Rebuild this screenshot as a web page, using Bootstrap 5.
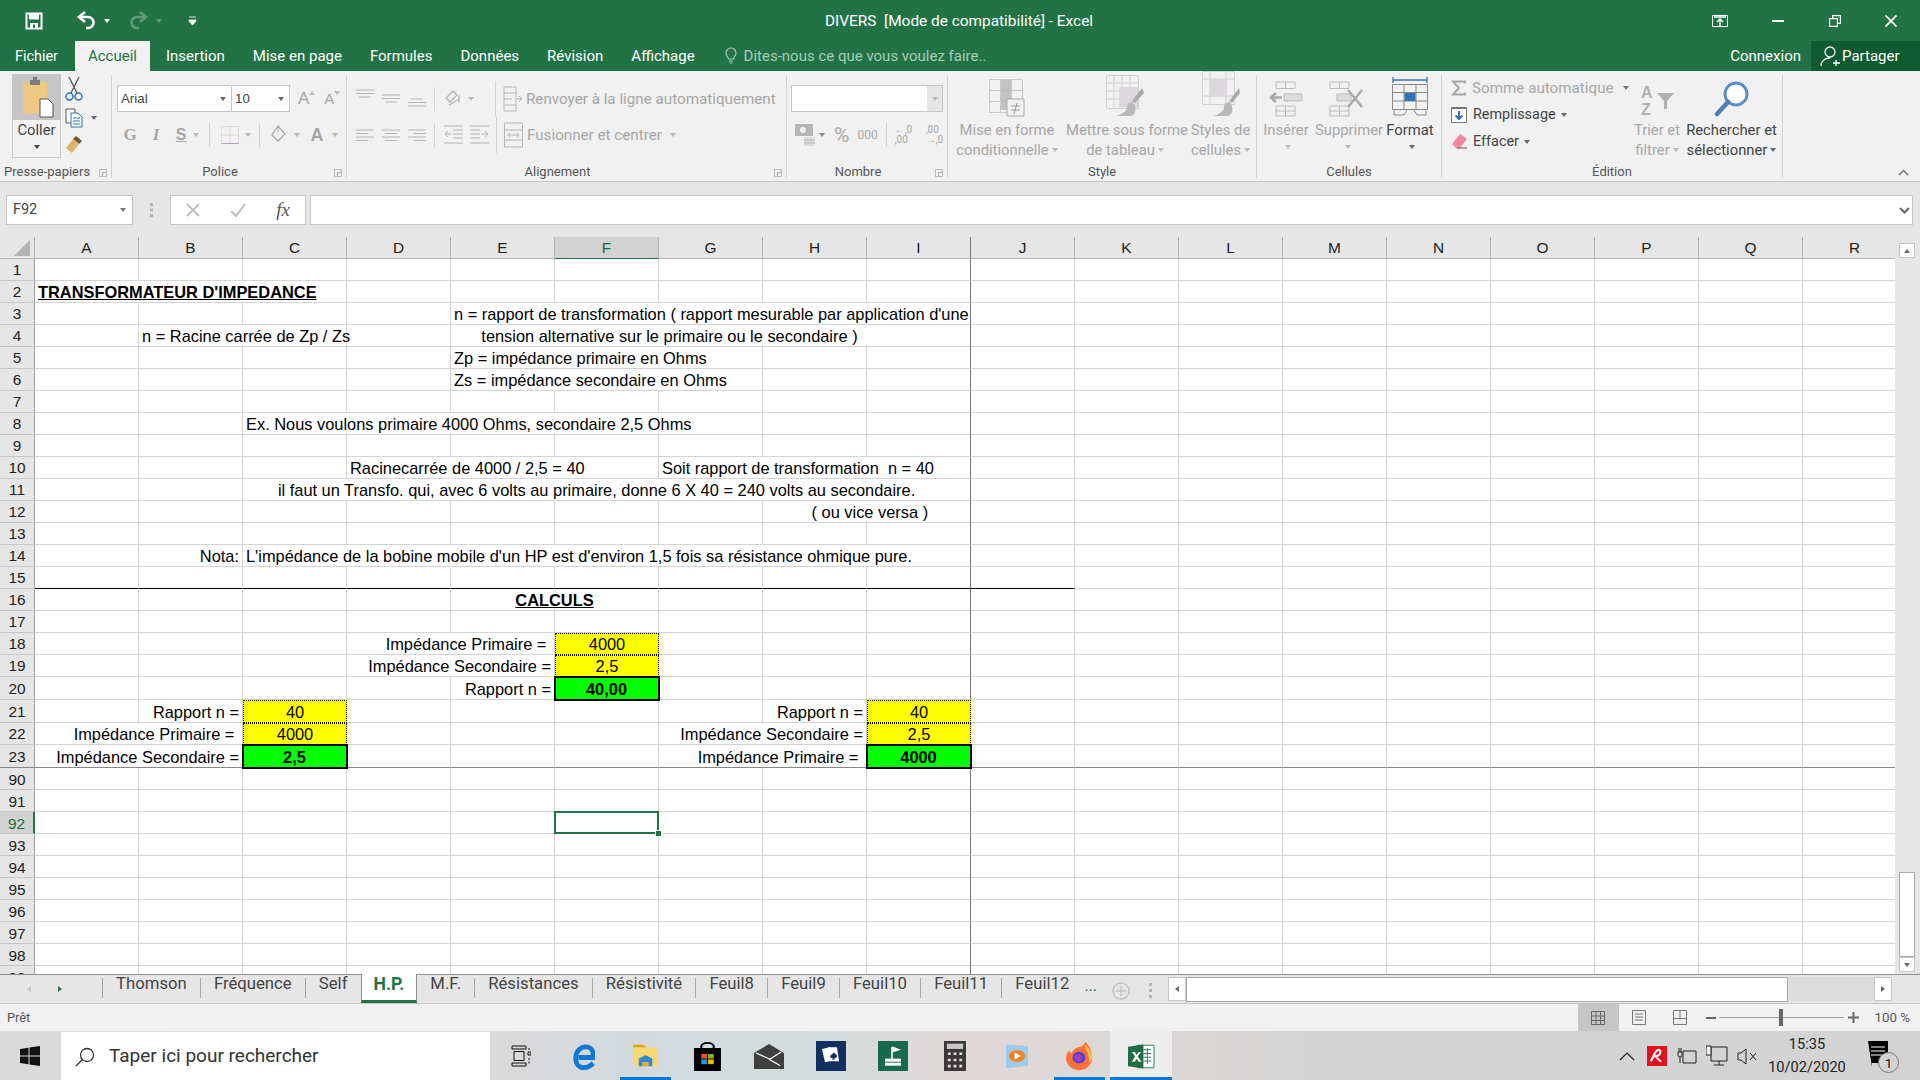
<!DOCTYPE html>
<html lang="fr">
<head>
<meta charset="UTF-8">
<title>DIVERS [Mode de compatibilité] - Excel</title>
<link href="https://cdn.jsdelivr.net/npm/bootstrap@5.3.3/dist/css/bootstrap.min.css" rel="stylesheet">
<style>
html, body { width: 1920px; height: 1080px; overflow: hidden; }
body { font-family: Roboto, "Open Sans", sans-serif; font-size: 14.8px; color: #444; background: #e6e6e6; line-height: 20px; }
svg { display: block; flex: none; }
.tri { width: 0; height: 0; border-left: 3.5px solid transparent; border-right: 3.5px solid transparent; border-top: 4px solid #666; flex: none; display: inline-block; }
.tri.dim { border-top-color: #b8b8b8; }
.tri.white { border-top-color: #fff; }
.tri.faded { border-top-color: #5f9a7a; }

/* title bar + tabs */
.titlebar { height: 41px; background: #217346; color: #fff; position: relative; }
.qat { width: 825px; padding-left: 25px; }
.doc-title { font-size: 15.4px; width: 268px; white-space: pre; }
.win { margin-left: auto; width: 208px; padding-right: 23px; justify-content: space-between; }
.menubar { height: 30px; background: #217346; color: #fff; padding-left: 15px; font-size: 15px; }
.menubar .mtab { padding: 0 14px; line-height: 30px; height: 30px; white-space: nowrap; }
.menubar .fichier { padding: 0; margin-right: 17px; line-height: 32px; font-size: 14.4px; }
.menubar .mtab.active { background: #f1f1f1; color: #217346; padding: 0 13px; margin-right: 2px; }
.tell { color: #a9cbb7; margin-left: 16px; gap: 7px; height: 30px; }
.connexion { margin-left: auto; margin-right: 10px; line-height: 30px; }
.partager { width: 109px; height: 30px; background: #0f5b31; padding-left: 8px; gap: 5px; }

/* ribbon */
.ribbon { height: 111px; background: #f1f1f1; border-bottom: 1px solid #c6c6c6; padding-top: 4px; position: relative; }
.rgroup { height: 103px; border-right: 1px solid #d2d2d2; flex: none; }
.rbody { height: 87px; display: flex; }
.rlabel { height: 16px; font-size: 13px; line-height: 20px; text-align: center; color: #555; position: relative; white-space: nowrap; }
.rlabel.lnch { padding-right: 18px; }
.launch { position: absolute; right: 4px; top: 7px; width: 8px; height: 8px; border: 1px solid #bbb; border-top-width: 1px; }
.launch::after { content: ""; position: absolute; right: 0; bottom: 0; width: 4px; height: 4px; background: #f1f1f1; border-left: 1px solid #aaa; border-top: 1px solid #aaa; }
.g-clip { width: 112px; } .g-font { width: 235px; } .g-align { width: 440px; }
.g-num { width: 161px; } .g-style { width: 309px; } .g-cell { width: 185px; } .g-edit { width: 341px; }
.coller { width: 49px; height: 84px; margin: -1px 0 0 12px; border: 1px solid #c6c6c6; text-align: center; }
.coller-top { height: 45px; background: #c6c6c6; }
.coller .lbl { line-height: 20px; color: #444; margin-bottom: 5px; }
.bigbtn { flex: none; text-align: center; line-height: 20px; color: #a6a6a6; white-space: nowrap; }
.bigbtn .ico { height: 45px; display: flex; justify-content: center; align-items: flex-end; padding-bottom: 3px; }
.bigbtn.on { color: #444; }
.bigbtn .tri { vertical-align: 3px; margin-left: 3px; }
.combo { height: 27px; background: #fff; border: 1px solid #c6c6c6; font-family: "Liberation Sans", sans-serif; font-size: 13.3px; color: #444; padding-left: 3px; }
.rsep { width: 1px; background: #d2d2d2; height: 24px; flex: none; }
.dimtxt { color: #a6a6a6; white-space: nowrap; font-size: 15.2px; }
.edit-row { height: 27px; gap: 6px; font-size: 14.4px; }
.glyph { font-family: "Liberation Sans", sans-serif; color: #a6a6a6; font-weight: 700; font-size: 16px; text-align: center; }

/* formula bar */
.fbar { height: 55px; background: #e6e6e6; padding: 13px 7px 0 6px; }
.fbar .box { height: 30px; background: #fff; border: 1px solid #c6c6c6; }
.namebox { width: 127px; padding: 0 6px; font-size: 14.4px; }
.fxbox { width: 136px; margin-left: 37px; justify-content: space-around; padding: 0; }
.fxsym { font-family: "Liberation Serif", serif; font-style: italic; font-size: 19px; color: #555; }
.finput { flex: 1; margin-left: 4px; padding-right: 2px; }

/* sheet */
.sheet-wrap { height: 737px; }
.sheet-clip { width: 1895px; height: 737px; overflow: hidden; position: relative; background: #fff; }
.sheet { table-layout: fixed; width: 1907px; border-collapse: separate; border-spacing: 0; font-family: "Liberation Sans", Arial, sans-serif; font-size: 16.4px; color: #000; }
.sheet th { background: #e6e6e6; font-weight: 400; text-align: center; font-size: 15.4px; color: #222; border-right: 1px solid #b1b1b1; border-bottom: 1px solid #b1b1b1; padding: 1px 0 0; position: relative; line-height: 18px; }
.sheet thead th { height: 22px; }
.sheet tbody th { border-right-color: #9e9e9e; border-bottom-color: #c6c6c6; }
.sheet tbody tr:nth-child(n+24) th { padding-top: 3px; }
.sheet td { border-right: 1px solid #d4d4d4; border-bottom: 1px solid #d4d4d4; padding: 0 3px 0 3px; white-space: pre; overflow: visible; line-height: 19px; vertical-align: bottom; position: relative; }
.corner::after { content: ""; position: absolute; right: 4px; bottom: 2px; border-left: 16px solid transparent; border-bottom: 16px solid #b4b4b4; }
.sheet th.cur-col { background: #d2d2d2; color: #1e6b41; border-bottom: 1px solid #217346; }
.sheet th.cur-row { background: #d2d2d2; color: #1e6b41; border-right: 2px solid #217346; }
.sheet .freeze-col { border-right-color: #777; }
.sheet tr.rule-black td.to-j { border-bottom-color: #000; }
.sheet tr.rule-freeze td, .sheet tr.rule-freeze th { border-bottom-color: #888; }
.sheet td.titre { font-weight: 700; text-decoration: underline; }
.sheet td.r { text-align: right; }
.sheet td.c { text-align: center; }
.sheet td.inp { background: #ff0; text-align: center; border: 1px dotted #000; }
.sheet td.res { background: #0f0; text-align: center; font-weight: 700; outline: 2px solid #000; outline-offset: -1px; z-index: 1; }
.sheet td.sel { z-index: 3; }
.sheet td.sel::after { content: ""; position: absolute; inset: -1px; border: 2px solid #217346; }
.sheet td.sel::before { content: ""; position: absolute; right: -4px; bottom: -4px; width: 7px; height: 7px; background: #217346; border: 1px solid #fff; z-index: 2; }

.vscroll { width: 25px; background: #e6e6e6; padding: 6px 5px 0 4px; }
.vbtn { width: 16px; height: 15px; background: #fff; border: 1px solid #c6c6c6; }
.vtrack { height: 699px; background: #e6e6e6; position: relative; }
.vthumb { position: absolute; left: 0; top: 614px; width: 16px; height: 85px; background: #fff; border: 1px solid #aaa; }

/* sheet tabs */
.tabs { height: 30px; background: #e6e6e6; border-top: 1px solid #8f8f8f; border-bottom: 1px solid #c6c6c6; position: relative; }
.tabnav { width: 102px; padding-left: 26px; gap: 25px; }
.stab { height: 20px; padding: 0 13.1px; border-left: 1px solid #a6a6a6; line-height: 12px; font-size: 16.7px; color: #444; white-space: nowrap; margin-top: 3px; }
.stab.active { height: 29px; margin-top: -1px; background: #fff; border: 1px solid #8f8f8f; border-top: 0; border-bottom: 3px solid #217346; color: #217346; font-weight: 700; font-size: 17.6px; line-height: 18px; padding: 1px 12px 0; }
.stab.active + .stab { border-left: 0; }
.hscroll { margin-left: auto; width: 752px; height: 25px; padding-right: 28px; margin-top: 2px; }
.hbtn { width: 18px; height: 24px; background: #fff; border: 1px solid #c6c6c6; }
.hthumb { width: 602px; height: 25px; background: #fff; border: 1px solid #aaa; }
.htrack { flex: 1; height: 24px; background: #dcdcdc; }

/* status + taskbar */
.status { height: 27px; background: #f1f1f1; padding-left: 7px; font-size: 12.8px; color: #555; }
.view { width: 41px; height: 27px; }
.view.on { background: #c6c6c6; }
.slider { width: 125px; height: 1px; background: #a0a0a0; margin: 0 4px 0 3px; position: relative; }
.slider::after { content: ""; position: absolute; left: 60px; top: -8px; width: 4px; height: 17px; background: #666; }
.taskbar { height: 50px; background: linear-gradient(90deg, #dbdada 0%, #dcd9d9 25%, #d2dade 33%, #d3dcdc 42%, #e1d9d8 51%, #dcd8d6 58%, #d4d4d4 70%, #d3d3d4 100%); color: #111; }
.searchbox { width: 429px; height: 49px; background: #fff; margin-left: 61px; margin-top: 1px; padding-left: 14px; gap: 10px; font-size: 19px; color: #333; position: absolute; top: 0; left: 0; }
.tbicons { margin-left: 490px; height: 50px; }
.tbi { width: 62px; height: 50px; flex: none; position: relative; }
.tbi.run::after { content: ""; position: absolute; left: 6px; right: 5px; bottom: 0; height: 4px; background: #0078d7; }
.tbi.act { background: #ededed; }
.tbi.act::after { left: 0; right: 0; }
.tray { margin-left: auto; padding-right: 28px; }
.clock { width: 96px; text-align: center; font-size: 14.6px; line-height: 23px; color: #222; }
</style>
</head>
<body>

<!-- title bar -->
<div class="titlebar d-flex align-items-center">
  <div class="qat d-flex align-items-center flex-none">
    <svg width="18" height="18" viewBox="0 0 18 18"><path d="M1.500 1.500h15v15h-15z" fill="none" stroke="#fff" stroke-width="2"/><path d="M4 1.500h10v6H4z" fill="#fff"/><path d="M5 11h8v6H5z" fill="#fff"/><path d="M8 12.500h2v3.500H8z" fill="#217346"/></svg>
    <svg style="margin-left:34px" width="19" height="19" viewBox="0 0 19 19"><path d="M3 6h8a5.500 5.500 0 0 1 0 11H9" fill="none" stroke="#fff" stroke-width="2.600"/><path d="M8 1 2 6l6 5" fill="none" stroke="#fff" stroke-width="2.600"/></svg>
    <span class="tri white ms-2"></span>
    <svg style="margin-left:19px" width="19" height="19" viewBox="0 0 19 19"><path d="M16 6H8a5.500 5.500 0 0 0 0 11h2" fill="none" stroke="#5f9a7a" stroke-width="2.600"/><path d="m11 1 6 5-6 5" fill="none" stroke="#5f9a7a" stroke-width="2.600"/></svg>
    <span class="tri faded ms-2"></span>
    <svg style="margin-left:26px" width="9" height="10" viewBox="0 0 9 10"><path d="M1 1h7M1 4h7v1L4.500 9 1 5z" fill="#fff" stroke="#fff" stroke-width=".8"/></svg>
  </div>
  <div class="doc-title">DIVERS  [Mode de compatibilité] - Excel</div>
  <div class="win d-flex align-items-center">
    <svg width="16" height="12" viewBox="0 0 16 12"><path d="M.5.5h15v11H.5z" fill="none" stroke="#fff"/><path d="M2 2h12M8 11V4M5 7l3-3 3 3" fill="none" stroke="#fff" stroke-width="1.400"/></svg>
    <svg width="12" height="2" viewBox="0 0 12 2"><path d="M0 1h12" stroke="#fff" stroke-width="2"/></svg>
    <svg width="12" height="12" viewBox="0 0 12 12"><path d="M.6 3.600h7.800v7.800H.6zM3.600 3.600V.6h7.800v7.800H8.400" fill="none" stroke="#fff" stroke-width="1.200"/></svg>
    <svg width="12" height="12" viewBox="0 0 12 12"><path d="m.5.5 11 11m0-11-11 11" stroke="#fff" stroke-width="1.800"/></svg>
  </div>
</div>

<!-- menu tabs -->
<div class="menubar d-flex align-items-start">
  <div class="mtab fichier">Fichier</div>
  <div class="mtab active">Accueil</div>
  <div class="mtab">Insertion</div>
  <div class="mtab">Mise en page</div>
  <div class="mtab">Formules</div>
  <div class="mtab">Données</div>
  <div class="mtab">Révision</div>
  <div class="mtab">Affichage</div>
  <div class="tell d-flex align-items-center">
    <svg width="12" height="18" viewBox="0 0 12 18"><path d="M3.500 12C3 9.500 1 8.500 1 6a5 5 0 0 1 10 0c0 2.500-2 3.500-2.500 6zM4 14h4M4.500 16h3" fill="none" stroke="#a9cbb7" stroke-width="1.200"/></svg>
    <span>Dites-nous ce que vous voulez faire..</span>
  </div>
  <div class="connexion">Connexion</div>
  <div class="partager d-flex align-items-center">
    <svg width="26" height="22" viewBox="0 0 26 22"><circle cx="11" cy="7" r="5" fill="none" stroke="#fff" stroke-width="1.300"/><path d="M2 21c0-5 4-8 9-8M17 15v6M14 18h7" fill="none" stroke="#fff" stroke-width="1.300"/></svg>
    <span style="margin-left:-8px">Partager</span>
  </div>
</div>

<!-- ribbon -->
<div class="ribbon d-flex">
  <div class="rgroup g-clip">
    <div class="rbody">
      <div class="coller">
        <div class="coller-top d-flex justify-content-center align-items-center">
          <svg width="34" height="42" viewBox="0 0 34 42"><path d="M3 5h24v32H3z" fill="#edc87e"/><path d="M10 3h10v5H10z" fill="#7d7d7d"/><path d="M13 0h4v4h-4z" fill="#7d7d7d"/><path d="M20 22h8l5 5v13H20z" fill="#fff" stroke="#555"/></svg>
        </div>
        <div class="lbl">Coller</div>
        <span class="tri d-block mx-auto" style="border-top-color:#444"></span>
      </div>
      <div class="ms-1 d-flex flex-column" style="gap:6px;padding-top:1px">
        <svg width="18" height="26" viewBox="0 0 18 26"><path d="M4 1l8 16M14 1 6 17" stroke="#555" stroke-width="1.300"/><circle cx="4.500" cy="20.500" r="3.500" fill="none" stroke="#2f75b5" stroke-width="1.500"/><circle cx="13.500" cy="20.500" r="3.500" fill="none" stroke="#2f75b5" stroke-width="1.500"/></svg>
        <div class="d-flex align-items-center gap-2"><svg width="18" height="20" viewBox="0 0 18 20"><path d="M1 1h9v14H1z" fill="#fff" stroke="#555"/><path d="M6 5h7l4 4v10H6z" fill="#fff" stroke="#2f75b5"/><path d="M8 10h7M8 13h7M8 16h7" stroke="#2f75b5"/></svg><span class="tri"></span></div>
        <svg width="18" height="20" viewBox="0 0 18 20"><path d="M11 2l6 5-3 3-6-5z" fill="#6b5b3a"/><path d="M8 5l6 5-7 9-6-5z" fill="#e0b566"/></svg>
      </div>
    </div>
    <div class="rlabel text-start ps-1">Presse-papiers<span class="launch"></span></div>
  </div>

  <div class="rgroup g-font">
    <div class="rbody flex-column">
      <div class="d-flex align-items-center" style="margin-top:10px;padding-left:5px;height:27px">
        <div class="combo d-flex align-items-center justify-content-between" style="width:115px;padding-right:5px">Arial<span class="tri"></span></div>
        <div class="combo d-flex align-items-center justify-content-between" style="width:59px;margin-left:-1px;padding-right:5px">10<span class="tri"></span></div>
        <span class="glyph fw-normal" style="font-size:17px;margin-left:8px">A</span><span class="tri dim" style="transform:rotate(180deg);margin-top:-12px"></span>
        <span class="glyph fw-normal" style="font-size:15px;margin-left:9px">A</span><span class="tri dim" style="margin-top:-12px"></span>
      </div>
      <div class="d-flex align-items-center" style="margin-top:10px;height:26px;padding-left:5px">
        <span class="glyph" style="font-family:'Liberation Serif';width:26px;font-size:17px">G</span>
        <span class="glyph" style="font-family:'Liberation Serif';font-style:italic;width:26px;font-size:17px">I</span>
        <span class="glyph text-decoration-underline" style="width:24px">S</span><span class="tri dim" style="margin-right:10px"></span>
        <span class="rsep"></span>
        <svg style="margin:0 6px 0 11px" width="18" height="18" viewBox="0 0 18 18"><path d="M.5.5h17v17H.5zM9 .5v17M.5 9h17" fill="none" stroke="#c9c0cc" stroke-dasharray="1 1"/><path d="M.5 17.500h17" stroke="#b0a0b4"/></svg><span class="tri dim" style="margin-right:8px"></span>
        <span class="rsep"></span>
        <svg style="margin:0 6px 0 10px" width="18" height="20" viewBox="0 0 18 20"><path d="M8 1 2 10l6 6 7-7z" fill="none" stroke="#aaa" stroke-width="1.300"/><path d="M8 1v6" stroke="#aaa"/></svg><span class="tri dim" style="margin-right:10.500px"></span>
        <span class="glyph" style="font-size:18px;margin-right:8px">A</span><span class="tri dim"></span>
      </div>
    </div>
    <div class="rlabel lnch">Police<span class="launch"></span></div>
  </div>

  <div class="rgroup g-align">
    <div class="rbody flex-column">
      <div class="d-flex align-items-center" style="margin-top:10px;height:27px;padding-left:9px">
        <svg width="18" height="10" style="margin-top:-10px" viewBox="0 0 18 10"><path d="M0 1h18M0 4.500h18M3 8h12" stroke="#b5b5b5"/></svg>
        <svg style="margin-left:8px" width="18" height="10" viewBox="0 0 18 10"><path d="M0 1h18M0 4.500h18M3 8h12" stroke="#b5b5b5"/></svg>
        <svg style="margin:8px 0 0 8px" width="18" height="10" viewBox="0 0 18 10"><path d="M3 1h12M0 4.500h18M0 8h18" stroke="#b5b5b5"/></svg>
        <span class="rsep" style="margin:0 9px 0 8px"></span>
        <svg width="20" height="20" viewBox="0 0 20 20"><path d="m2 9 7-7 4 4-7 7zM5 16l10-6M15 6v8" fill="none" stroke="#b5b5b5" stroke-width="1.300"/></svg>
        <span class="tri dim" style="margin:0 21px 0 4px"></span>
        <span class="rsep" style="height:36px"></span>
        <svg style="margin-left:7px" width="20" height="26" viewBox="0 0 20 26"><path d="M1 1h12v24H1zM1 7h12M1 13h8M1 19h12M14 13h5M16 10l3 3-3 3" fill="none" stroke="#b5b5b5"/></svg>
        <span class="dimtxt" style="margin-left:3px">Renvoyer à la ligne automatiquement</span>
      </div>
      <div class="d-flex align-items-center" style="margin-top:10px;height:26px;padding-left:9px">
        <svg width="18" height="12" viewBox="0 0 18 12"><path d="M0 1h18M0 4.500h12M0 8h18M0 11.500h12" stroke="#b5b5b5"/></svg>
        <svg style="margin-left:8px" width="18" height="12" viewBox="0 0 18 12"><path d="M0 1h18M3 4.500h12M0 8h18M3 11.500h12" stroke="#b5b5b5"/></svg>
        <svg style="margin-left:8px" width="18" height="12" viewBox="0 0 18 12"><path d="M0 1h18M6 4.500h12M0 8h18M6 11.500h12" stroke="#b5b5b5"/></svg>
        <span class="rsep" style="margin:0 9px 0 8px"></span>
        <svg width="19" height="20" viewBox="0 0 19 20"><path d="M0 1h19M9 5h10M9 9h10M9 13h10M0 18h19M7 9H1M4 6 1 9l3 3" fill="none" stroke="#b5b5b5"/></svg>
        <svg style="margin-left:7px" width="19" height="20" viewBox="0 0 19 20"><path d="M0 1h19M0 5h10M0 9h10M0 13h10M0 18h19M12 9h6M15 6l3 3-3 3" fill="none" stroke="#b5b5b5"/></svg>
        <span class="rsep" style="margin-left:7px;height:36px"></span>
        <svg style="margin-left:7px" width="20" height="26" viewBox="0 0 20 26"><path d="M.5 1h18v24H.5zM.5 8h18M.5 18h18M4 13h11M6 11l-2 2 2 2m7-4 2 2-2 2" fill="none" stroke="#b5b5b5"/></svg>
        <span class="dimtxt" style="margin-left:3px">Fusionner et centrer</span><span class="tri dim ms-2"></span>
      </div>
    </div>
    <div class="rlabel lnch">Alignement<span class="launch"></span></div>
  </div>

  <div class="rgroup g-num">
    <div class="rbody flex-column">
      <div class="d-flex" style="margin:10px 0 0 4px;height:27px;width:152px;background:#fff;border:1px solid #c6c6c6">
        <div class="flex-grow-1"></div>
        <div class="d-flex align-items-center justify-content-center" style="width:15px;background:#e6e6e6"><span class="tri dim"></span></div>
      </div>
      <div class="d-flex align-items-center" style="margin-top:10px;height:26px;padding-left:8px">
        <svg width="20" height="24" viewBox="0 0 20 24"><path d="M0 1h18v12H0z" fill="#b5b5b5"/><circle cx="8" cy="7" r="3" fill="#f1f1f1"/><path d="M9 14h11v9H9z" fill="#dcdcdc"/><path d="M9 17h11M9 20h11" stroke="#b5b5b5"/></svg>
        <span class="tri ms-1" style="border-top-color:#888"></span>
        <span class="dimtxt" style="font-size:21px;margin-left:9px">%</span>
        <span class="dimtxt" style="font-size:12px;margin-left:8px">000</span>
        <span class="rsep" style="margin-left:8px"></span>
        <div class="dimtxt" style="font-size:10px;line-height:10px;margin-left:8px;width:24px"><span>←,0</span><br><span>,00</span></div>
        <div class="dimtxt" style="font-size:10px;line-height:10px;margin-left:7px"><span> ,00</span><br><span>→,0</span></div>
      </div>
    </div>
    <div class="rlabel lnch">Nombre<span class="launch"></span></div>
  </div>

  <div class="rgroup g-style">
    <div class="rbody">
      <div class="bigbtn" style="width:118px">
        <div class="ico"><svg width="36" height="38" viewBox="0 0 36 38"><path d="M.5.5h33v33H.5zM11.500.5v33M22.500.5v33M.5 11.500h33M.5 22.500h33" fill="none" stroke="#c8c8c8"/><path d="M12 1h10v30H12z" fill="#b8b8b8" opacity=".8"/><path d="M18 20h17v17H18z" fill="#f1f1f1" stroke="#aaa"/><path d="M22 27h9M22 31h9M28 24l-3 11" stroke="#999"/></svg></div>
        <div>Mise en forme</div><div>conditionnelle<span class="tri dim"></span></div>
      </div>
      <div class="bigbtn" style="width:118px">
        <div class="ico"><svg width="38" height="42" viewBox="0 0 38 42"><path d="M.5.5h32v33H.5zM8 .5v33M16 .5v33M24 .5v33M.5 8h32M.5 16h32M.5 24h32" fill="none" stroke="#d0d0d0"/><path d="M13 12h19v20H13z" fill="#dcd7dc"/><path d="M36 13 26 26l3 2 9-10z" fill="#aaa"/><path d="M26 27c-5 1-5 4-5 6s-5 7-11 8h15c6-2 5-9 3-12z" fill="#b8b8b8"/></svg></div>
        <div>Mettre sous forme</div><div>de tableau<span class="tri dim"></span></div>
      </div>
      <div class="bigbtn" style="width:73px">
        <div class="ico" style="margin-top:-2px;height:47px"><svg width="38" height="46" viewBox="0 0 38 46"><path d="M.5.5h32v33H.5zM8 .5v33M24 .5v33M.5 8h32M.5 25h32" fill="none" stroke="#d0d0d0"/><path d="M8 8h17v17H8z" fill="#dcd7dc"/><path d="M37 17 27 30l3 2 8-10z" fill="#aaa"/><path d="M27 31c-5 1-5 4-5 6s-5 7-11 8h15c6-2 5-9 3-12z" fill="#b8b8b8"/></svg></div>
        <div>Styles de</div><div>cellules<span class="tri dim"></span></div>
      </div>
    </div>
    <div class="rlabel">Style</div>
  </div>

  <div class="rgroup g-cell">
    <div class="rbody">
      <div class="bigbtn" style="width:58px">
        <div class="ico"><svg width="36" height="36" viewBox="0 0 36 36"><path d="M8 1h19v6.500H8zM17.500 1v6.500M8 25h19v10H8zM17.500 25v10M8 30h19" fill="none" stroke="#bbb"/><path d="M16 13h18v7H16z" fill="#dcdcdc" stroke="#bbb"/><path d="M14 16.500H3M8 12l-5 4.500L8 21" fill="none" stroke="#aaa" stroke-width="2.500"/></svg></div>
        <div>Insérer</div><span class="tri dim" style="vertical-align:6px"></span>
      </div>
      <div class="bigbtn" style="width:63px">
        <div class="ico"><svg width="36" height="36" viewBox="0 0 36 36"><path d="M1 1h19v6.500H1zM10.500 1v6.500M1 25h19v10H1zM10.500 25v10M1 30h19" fill="none" stroke="#bbb"/><path d="M8 13h14v7H8z" fill="#dcdcdc" stroke="#bbb"/><path d="m19 9 14 17m0-17L19 26" stroke="#aaa" stroke-width="2.500"/></svg></div>
        <div>Supprimer</div><span class="tri dim" style="vertical-align:6px"></span>
      </div>
      <div class="bigbtn on" style="width:64px">
        <div class="ico"><svg width="36" height="42" viewBox="0 0 36 42"><path d="M1 2v6M35 2v6M1 5h34" stroke="#2f75b5" stroke-width="1.300"/><path d="M.5 9.500h35v25H.5zM12 9.500v25M24 9.500v25M.5 17.500h35M.5 26h35" fill="none" stroke="#888"/><path d="M12.500 18h11v8h-11z" fill="#2f75b5"/><path d="M2 35v5h10l3-5M22 35l3 5h9v-5" fill="none" stroke="#888"/></svg></div>
        <div>Format</div><span class="tri" style="vertical-align:6px"></span>
      </div>
    </div>
    <div class="rlabel">Cellules</div>
  </div>

  <div class="rgroup g-edit">
    <div class="rbody">
      <div style="width:192px;padding:0 0 0 9px;margin-top:-1px">
        <div class="edit-row d-flex align-items-center">
          <svg width="15" height="16" viewBox="0 0 15 16"><path d="M14 3.500V1.500H2L8 8l-6 6.500h12v-2" fill="none" stroke="#a6a6a6" stroke-width="2"/></svg>
          <span class="dimtxt">Somme automatique</span><span class="tri" style="margin-left:3px;border-top-color:#777"></span>
        </div>
        <div class="edit-row d-flex align-items-center">
          <svg width="16" height="17" viewBox="0 0 16 17"><path d="M.5 1.500h15v15H.5z" fill="#fff" stroke="#777"/><path d="M1 1h14v2H1z" fill="#777"/><path d="M8 5v8M4.500 9.500 8 13l3.500-3.500" fill="none" stroke="#2f75b5" stroke-width="2"/></svg>
          <span>Remplissage</span><span class="tri" style="margin-left:-1px"></span>
        </div>
        <div class="edit-row d-flex align-items-center">
          <svg width="16" height="17" viewBox="0 0 16 17"><path d="m9 1 7 5-7 9H5L1 11z" fill="#ec8a9b"/><path d="M6 15h10" stroke="#555"/></svg>
          <span>Effacer</span><span class="tri" style="margin-left:-1px"></span>
        </div>
      </div>
      <div class="bigbtn" style="width:48px">
        <div class="ico"><svg width="36" height="33" viewBox="0 0 36 33"><text x="2" y="14" font-family="Liberation Sans" font-weight="700" font-size="16" fill="#b0b0b0">A</text><text x="2" y="31" font-family="Liberation Sans" font-weight="700" font-size="16" fill="#b0b0b0">Z</text><path d="M18 9h17l-7 8v8h-3v-8z" fill="#b0b0b0"/></svg></div>
        <div>Trier et</div><div>filtrer<span class="tri dim"></span></div>
      </div>
      <div class="bigbtn on" style="width:101px">
        <div class="ico"><svg width="36" height="36" viewBox="0 0 36 36"><circle cx="22" cy="13" r="11" fill="#fff" stroke="#5b8ec4" stroke-width="3"/><path d="M14 21 3 33" stroke="#4a7fb8" stroke-width="4.500" stroke-linecap="round"/></svg></div>
        <div>Rechercher et</div><div>sélectionner<span class="tri"></span></div>
      </div>
    </div>
    <div class="rlabel">Édition</div>
  </div>
  <svg class="position-absolute" style="left:1898px;top:98px" width="11" height="7" viewBox="0 0 11 7"><path d="m1 6 4.500-4.500L10 6" fill="none" stroke="#666" stroke-width="1.300"/></svg>
</div>

<!-- formula bar -->
<div class="fbar d-flex align-items-start">
  <div class="box namebox d-flex align-items-center justify-content-between">F92<span class="tri" style="border-top-color:#777"></span></div>
  <svg class="position-absolute" style="left:150px;top:203px" width="3" height="14" viewBox="0 0 3 14"><path d="M0 0h3v3H0zM0 5.500h3v3H0zM0 11h3v3H0z" fill="#b4b4b4"/></svg>
  <div class="box fxbox d-flex align-items-center">
    <svg width="14" height="14" viewBox="0 0 14 14"><path d="m1 1 12 12M13 1 1 13" stroke="#bdbdbd" stroke-width="1.800"/></svg>
    <svg width="16" height="14" viewBox="0 0 16 14"><path d="m1 8 5 5L15 1" fill="none" stroke="#bdbdbd" stroke-width="2"/></svg>
    <span class="fxsym">fx</span>
  </div>
  <div class="box finput d-flex align-items-center justify-content-end">
    <svg width="11" height="7" viewBox="0 0 11 7"><path d="m1 1 4.500 4.500L10 1" fill="none" stroke="#666" stroke-width="2"/></svg>
  </div>
</div>

<!-- sheet -->
<div class="sheet-wrap d-flex">
  <div class="sheet-clip"><table class="sheet" id="sheet"></table></div>
  <div class="vscroll">
    <div class="vbtn d-flex align-items-center justify-content-center"><span class="tri" style="transform:rotate(180deg)"></span></div>
    <div class="vtrack"><div class="vthumb"></div></div>
    <div class="vbtn d-flex align-items-center justify-content-center"><span class="tri"></span></div>
  </div>
</div>

<!-- sheet tabs -->
<div class="tabs d-flex align-items-start">
  <div class="tabnav d-flex align-items-center" style="height:28px">
    <span class="tri" style="transform:rotate(90deg);border-top-color:#c6c6c6"></span>
    <span class="tri" style="transform:rotate(-90deg);border-top-color:#217346"></span>
  </div>
  <div class="stab">Thomson</div>
  <div class="stab">Fréquence</div>
  <div class="stab">Self</div>
  <div class="stab active">H.P.</div>
  <div class="stab">M.F.</div>
  <div class="stab">Résistances</div>
  <div class="stab">Résistivité</div>
  <div class="stab">Feuil8</div>
  <div class="stab">Feuil9</div>
  <div class="stab">Feuil10</div>
  <div class="stab">Feuil11</div>
  <div class="stab">Feuil12</div>
  <div style="color:#217346;line-height:22px;margin-left:2px;font-size:16px">...</div>
  <svg class="position-absolute" style="left:1112px;top:7px" width="18" height="18" viewBox="0 0 18 18"><circle cx="9" cy="9" r="8" fill="none" stroke="#c6c6c6" stroke-width="1.500"/><path d="M9 4v10M4 9h10" stroke="#c6c6c6" stroke-width="1.500"/></svg>
  <svg class="position-absolute" style="left:1149px;top:8px" width="3" height="15" viewBox="0 0 3 15"><path d="M0 0h3v3H0zM0 6h3v3H0zM0 12h3v3H0z" fill="#b4b4b4"/></svg>
  <div class="hscroll d-flex align-items-start">
    <div class="hbtn d-flex align-items-center justify-content-center"><span class="tri" style="transform:rotate(90deg)"></span></div>
    <div class="hthumb"></div>
    <div class="htrack"></div>
    <div class="hbtn d-flex align-items-center justify-content-center"><span class="tri" style="transform:rotate(-90deg)"></span></div>
  </div>
</div>

<!-- status bar -->
<div class="status d-flex align-items-center">
  <span>Prêt</span>
  <div class="ms-auto d-flex align-items-center" style="padding-right:10px">
    <div class="view on d-flex align-items-center justify-content-center"><svg width="14" height="14" viewBox="0 0 14 14"><path d="M.5.5h13v13H.5zM5 .5v13M9.500.5v13M.5 5h13M.5 9.500h13" fill="none" stroke="#666"/></svg></div>
    <div class="view d-flex align-items-center justify-content-center"><svg width="14" height="15" viewBox="0 0 14 15"><path d="M.5.5h13v14H.5z" fill="none" stroke="#777"/><path d="M3 4h8M3 7h8M3 10h8" stroke="#777"/></svg></div>
    <div class="view d-flex align-items-center justify-content-center"><svg width="14" height="15" viewBox="0 0 14 15"><path d="M.5.5h13v14H.5zM7 .5v8M.5 8.500h13" fill="none" stroke="#777"/></svg></div>
    <svg width="10" height="2" viewBox="0 0 10 2" style="margin-left:5px"><path d="M0 1h10" stroke="#666" stroke-width="2"/></svg>
    <div class="slider"></div>
    <svg width="11" height="11" viewBox="0 0 11 11"><path d="M0 5.500h11M5.500 0v11" stroke="#666" stroke-width="2"/></svg>
    <span style="margin-left:16px;font-size:13.3px">100 %</span>
  </div>
</div>

<!-- taskbar -->
<div class="taskbar d-flex align-items-center position-relative">
  <svg class="position-absolute" style="left:20px;top:15px" width="20" height="20" viewBox="0 0 20 20"><path d="M0 3l8.500-1.200v7.600H0zM9.500 1.600 20 0v9.400H9.500zM0 10.500h8.500v7.700L0 17zM9.500 10.500H20V20L9.500 18.400z" fill="#111"/></svg>
  <div class="searchbox d-flex align-items-center">
    <svg width="20" height="20" viewBox="0 0 20 20"><circle cx="12" cy="8" r="6.500" fill="none" stroke="#333" stroke-width="1.300"/><path d="M7.500 12.500 1 19" stroke="#333" stroke-width="1.300"/></svg>
    <span class="ms-1" style="margin-top:-2px">Taper ici pour rechercher</span>
  </div>
  <div class="tbicons d-flex">
    <div class="tbi d-flex align-items-center justify-content-center" style="margin-left:-3px;width:65px">
      <svg width="22" height="22" viewBox="0 0 22 22"><path d="M3 1h14v3H3zM3 18h14v3H3zM5 6.500h10v9H5zM19 7h3v3h-3z" fill="none" stroke="#111"/><path d="M20 13v2M20 16.500v2M20 3v2" stroke="#111"/></svg>
    </div>
    <div class="tbi d-flex align-items-center justify-content-center">
      <svg width="24" height="27" viewBox="0 0 26 28" preserveAspectRatio="none"><path d="M24 21c-3 3-7 4.500-10 4.500-6 0-9-4.500-9-9.500 0-7 5-12 11-12 5 0 8 3.500 8 8v3H8" fill="none" stroke="#0f78d4" stroke-width="5"/></svg>
    </div>
    <div class="tbi run d-flex align-items-center justify-content-center">
      <svg width="27" height="24" viewBox="0 0 28 28" preserveAspectRatio="none"><path d="M1 1h11l3 3h-14z" fill="#e0a30e"/><path d="M1 4h26v22H1z" fill="#f8d775"/><path d="M7 26v-9l7-4 7 4v9h-4v-5h-6v5z" fill="#2b88d8"/><path d="M11 21h6v5h-6z" fill="#f3b01b"/></svg>
    </div>
    <div class="tbi d-flex align-items-center justify-content-center">
      <svg width="29" height="29" viewBox="0 0 28 34" preserveAspectRatio="none"><path d="M1 7h26v27H1z" fill="#000"/><path d="M8 9V5a6 4 0 0 1 12 0v4" fill="none" stroke="#000" stroke-width="2"/><path d="M8 14h5.500v5.500H8z" fill="#f25022"/><path d="M14.500 14H20v5.500h-5.500z" fill="#7fba00"/><path d="M8 20.500h5.500V26H8z" fill="#00a4ef"/><path d="M14.500 20.500H20V26h-5.500z" fill="#ffb900"/></svg>
    </div>
    <div class="tbi d-flex align-items-center justify-content-center">
      <svg width="30" height="25" viewBox="0 0 30 28" preserveAspectRatio="none"><path d="M0 10 15 0l15 10v18H0z" fill="#3f3f3f"/><path d="M2 10l14 7 11-8M15 17l11 7" fill="none" stroke="#fff" stroke-width="1.300"/></svg>
    </div>
    <div class="tbi d-flex align-items-center justify-content-center">
      <svg width="30" height="30" viewBox="0 0 30 34" preserveAspectRatio="none"><path d="M0 0h30v34H0z" fill="#12305f"/><path d="M6 9l8-2 3 15-8 2z" fill="#fff"/><path d="M12 7h9l2 16h-9z" fill="#fff"/><path d="M18 13c3 3 4 4 2 6-1 1-2 0-2 0l1 2h-3l1-2s-1 1-2 0c-2-2 0-3 3-6z" fill="#12305f"/></svg>
    </div>
    <div class="tbi d-flex align-items-center justify-content-center">
      <svg width="30" height="30" viewBox="0 0 30 34" preserveAspectRatio="none"><path d="M0 0h30v34H0z" fill="#156b4b"/><path d="M14 7v14" stroke="#fff" stroke-width="1.500"/><path d="M14 6l9 4-9 3z" fill="#fff"/><path d="M7 20h16v8H7z" fill="#fff"/><path d="M7 24h16" stroke="#156b4b"/></svg>
    </div>
    <div class="tbi d-flex align-items-center justify-content-center">
      <svg width="22" height="30" viewBox="0 0 23 34" preserveAspectRatio="none"><path d="M0 0h23v34H0z" fill="#3b3837"/><path d="M3 3h17v6H3z" fill="#c8c8c8"/><path d="M4 13h3v3H4zM10 13h3v3h-3zM16 13h3v3h-3zM4 20h3v3H4zM10 20h3v3h-3zM16 20h3v3h-3zM4 27h3v3H4zM10 27h3v3h-3zM16 27h3v3h-3z" fill="#ddd"/></svg>
    </div>
    <div class="tbi d-flex align-items-center justify-content-center">
      <svg width="24" height="26" viewBox="0 0 24 34" preserveAspectRatio="none"><path d="M1 2l22 2v26L1 33z" fill="#9ecbea"/><circle cx="12" cy="17" r="8" fill="#f58220"/><path d="M9.500 12.500v9l7-4.500z" fill="#fff"/></svg>
    </div>
    <div class="tbi run d-flex align-items-center justify-content-center">
      <svg width="28" height="30" viewBox="0 0 30 36" preserveAspectRatio="none"><path d="M22 1c3 4 7 9 7 18a14 15 0 0 1-28 2c0-4 2-8 4-10 0 2 1 3 2 4 2-5 6-8 10-8 2-2 4-3 5-6z" fill="#ff7139"/><path d="M20 3c3 3 9 8 9 16 0 2-1 5-3 7 0-8-3-16-6-23z" fill="#ffbd4f"/><circle cx="15" cy="20" r="7" fill="#5b3cc4"/><circle cx="14" cy="20" r="4" fill="#9a3fd0"/></svg>
    </div>
    <div class="tbi run act d-flex align-items-center justify-content-center">
      <svg width="27" height="27" viewBox="0 0 28 36" preserveAspectRatio="none"><path d="M10 3h17v30H10z" fill="#fff" stroke="#1f6e43"/><path d="M16 9h8M16 14h8M16 19h8M16 24h8M20 7v21" stroke="#1f6e43"/><path d="M0 5l16-3v32L0 31z" fill="#1f6e43"/><path d="m4 12 3 0 2 4 2-4h2.500L10 18l4 7h-3l-2-4-2 4H4l3.500-7z" fill="#fff"/></svg>
    </div>
  </div>
  <div class="tray d-flex align-items-center">
    <svg width="16" height="9" viewBox="0 0 16 9" style="margin-right:12px"><path d="m1 8 7-7 7 7" fill="none" stroke="#222" stroke-width="1.200"/></svg>
    <svg width="20" height="20" viewBox="0 0 21 21" style="margin-right:10px"><path d="M0 0h21v21H0z" fill="#e2101b"/><path d="M4 16C7 11 9 4 12 4c2 0 3 2 1 5-2 2-5 2-5 2 3 0 4 5 7 5" fill="none" stroke="#fff" stroke-width="2.200"/></svg>
    <svg width="20" height="18" viewBox="0 0 20 18" style="margin-right:9px"><path d="M6 4h13v12H6z" fill="none" stroke="#222"/><path d="M1 5v3a2 2 0 0 0 4 0V5zM2 1v4M4 1v4M3 10v6" fill="none" stroke="#222"/></svg>
    <svg width="22" height="22" viewBox="0 0 22 22" style="margin-right:9px"><path d="M5 2h16v14H5zM13 16v4M8 20h10" fill="none" stroke="#222"/><path d="M0 1h5v9H0z" fill="#f0f0f0" stroke="#222"/></svg>
    <svg width="20" height="17" viewBox="0 0 20 17"><path d="M1 5h3l5-4v15l-5-4H1z" fill="none" stroke="#222"/><path d="m13 5 6 7m0-7-6 7" stroke="#222"/></svg>
    <div class="clock" style="margin-left:2px">15:35<br>10/02/2020</div>
    <div class="position-relative" style="width:32px;height:34px;margin-left:5px">
      <svg class="position-absolute" style="left:8px;top:2px" width="20" height="26" viewBox="0 0 20 26"><path d="M0 0h20v22H4v4z" fill="#000"/><path d="M3 6h14M3 10h14M3 14h14" stroke="#fff" stroke-width="1.200"/></svg>
      <span class="position-absolute d-flex align-items-center justify-content-center rounded-circle" style="left:18px;top:13px;width:21px;height:21px;border:1px solid #777;background:#d3d3d3;font-size:13.5px;color:#111">1</span>
    </div>
  </div>
</div>

<script>
const COLS = "ABCDEFGHIJKLMNOPQR".split("");
// [first column (0 = A), span, text, classes]
const CELLS = {
  2:  [[0, 3, "TRANSFORMATEUR D'IMPEDANCE", "titre"]],
  3:  [[4, 5, "n = rapport de transformation ( rapport mesurable par application d'une"]],
  4:  [[1, 2, "n = Racine carrée de Zp / Zs"], [4, 5, "      tension alternative sur le primaire ou le secondaire )"]],
  5:  [[4, 3, "Zp = impédance primaire en Ohms"]],
  6:  [[4, 3, "Zs = impédance secondaire en Ohms"]],
  8:  [[2, 5, "Ex. Nous voulons primaire 4000 Ohms, secondaire 2,5 Ohms"]],
  10: [[3, 3, "Racinecarrée de 4000 / 2,5 = 40"], [6, 3, "Soit rapport de transformation  n = 40"]],
  11: [[2, 7, "       il faut un Transfo. qui, avec 6 volts au primaire, donne 6 X 40 = 240 volts au secondaire."]],
  12: [[7, 2, "          ( ou vice versa )"]],
  14: [[1, 1, "Nota:", "r"], [2, 7, "L'impédance de la bobine mobile d'un HP est d'environ 1,5 fois sa résistance ohmique pure."]],
  16: [[4, 2, "CALCULS", "titre c"]],
  18: [[3, 2, "Impédance Primaire = ", "r"], [5, 1, "4000", "inp"]],
  19: [[3, 2, "Impédance Secondaire =", "r"], [5, 1, "2,5", "inp"]],
  20: [[4, 1, "Rapport n =", "r"], [5, 1, "40,00", "res"]],
  21: [[1, 1, "Rapport n =", "r"], [2, 1, "40", "inp"], [7, 1, "Rapport n =", "r"], [8, 1, "40", "inp"]],
  22: [[0, 2, "Impédance Primaire = ", "r"], [2, 1, "4000", "inp"], [6, 2, "Impédance Secondaire =", "r"], [8, 1, "2,5", "inp"]],
  23: [[0, 2, "Impédance Secondaire =", "r"], [2, 1, "2,5", "res"], [6, 2, "Impédance Primaire = ", "r"], [8, 1, "4000", "res"]],
  92: [[5, 1, "", "sel"]]
};
const TALL = [20, 21, 23];
const ROWS = [];
for (let i = 1; i <= 23; i++) ROWS.push(i);
for (let i = 90; i <= 99; i++) ROWS.push(i);

let html = '<colgroup><col style="width:35px">' + COLS.map(() => '<col style="width:104px">').join("") + '</colgroup>';
html += '<thead><tr><th class="corner"></th>' + COLS.map(c =>
  `<th class="${c === "F" ? "cur-col" : ""} ${c === "I" ? "freeze-col" : ""}">${c}</th>`).join("") + '</tr></thead><tbody>';

ROWS.forEach(n => {
  const cls = n === 15 ? "rule-black" : n === 23 ? "rule-freeze" : "";
  const h = TALL.includes(n) ? 23 : 22;
  let row = `<tr class="${cls}" style="height:${h}px"><th class="${n === 92 ? "cur-row" : ""}">${n}</th>`;
  const cells = CELLS[n] || [];
  for (let c = 0; c < COLS.length; c++) {
    const cell = cells.find(x => x[0] === c);
    const span = cell ? cell[1] : 1;
    const last = c + span - 1;
    const classes = [cell && cell[3] ? cell[3] : "", last === 8 ? "freeze-col" : "", last <= 9 ? "to-j" : ""].join(" ");
    row += `<td colspan="${span}" class="${classes}">${cell ? cell[2] : ""}</td>`;
    c = last;
  }
  html += row + "</tr>";
});
document.getElementById("sheet").innerHTML = html + "</tbody>";
</script>
<script src="https://cdn.jsdelivr.net/npm/bootstrap@5.3.3/dist/js/bootstrap.bundle.min.js"></script>
</body>
</html>
